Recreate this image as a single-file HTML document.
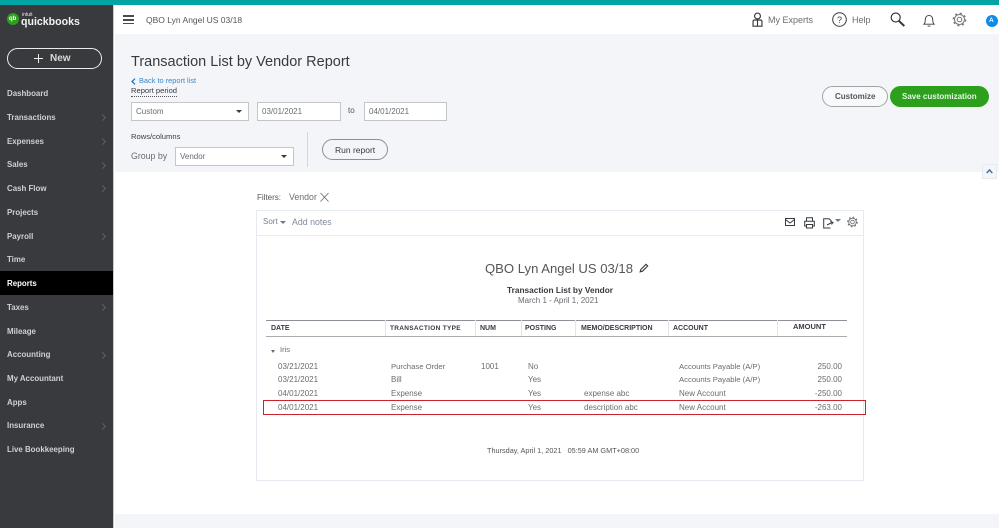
<!DOCTYPE html>
<html lang="en"><head><meta charset="utf-8"><title>Transaction List by Vendor Report</title>
<style>
html,body{margin:0;padding:0;width:999px;height:528px;overflow:hidden;background:#fff}
body{position:relative;font-family:"Liberation Sans",sans-serif;color:#393a3d}
#w{position:absolute;left:0;top:0;width:999px;height:528px;overflow:hidden;background:#fff;filter:blur(.35px)}
.a{position:absolute}
.t{position:absolute;white-space:nowrap;line-height:14px;height:14px}
.n{left:7px;font-size:7.9px;font-weight:bold;color:#cfd0d2}
.c{position:absolute;left:100px;width:4px;height:4px;border-top:1px solid #5f6063;border-right:1px solid #5f6063;transform:rotate(45deg)}
.h{font-size:7px;font-weight:bold;color:#393a3d}
.r{font-size:8px;color:#6b6c72}
.ac{font-size:7.7px}
.inp{position:absolute;background:#fff;border:1px solid #c4c6cb;box-sizing:border-box}
.arrow{position:absolute;width:0;height:0;border-left:3px solid transparent;border-right:3px solid transparent;border-top:3px solid #393a3d}
.sep{position:absolute;top:320px;width:1px;height:16px;background:#e3e5e8}
svg{position:absolute;overflow:visible}
</style></head><body><div id="w">
<div class="a" style="left:0;top:0;width:999px;height:5px;background:#00a5a3"></div>
<div class="a" style="left:115px;top:34px;width:884px;height:138px;background:#f4f5f8"></div>
<div class="a" style="left:115px;top:514px;width:884px;height:14px;background:#f4f5f8"></div>

<!-- sidebar -->
<div class="a" style="left:0;top:5px;width:113px;height:523px;background:#393a3d"></div>
<div class="a" style="left:113px;top:5px;width:1px;height:523px;background:#c9cacc"></div>
<div class="a" style="left:7px;top:13px;width:12px;height:12px;border-radius:50%;background:#2ca01c"></div>
<div class="t" style="left:9px;top:12px;font-size:6px;font-weight:bold;color:#fff">qb</div>
<div class="t" style="left:22px;top:8px;font-size:5px;color:#e8e8e8">intuit</div>
<div class="t" style="left:21px;top:15px;font-size:10.600px;font-weight:bold;color:#f2f2f2">quickbooks</div>
<div class="a" style="left:7px;top:48px;width:95px;height:21px;box-sizing:border-box;border:1.500px solid #eceded;border-radius:11px"></div>
<div class="a" style="left:34px;top:58px;width:9px;height:1px;background:#eee"></div>
<div class="a" style="left:38px;top:54px;width:1px;height:9px;background:#eee"></div>
<div class="t" style="left:50px;top:52px;font-size:10px;font-weight:bold;color:#d8d9da">New</div>
<div class="a" style="left:0;top:271px;width:113px;height:24px;background:#000"></div>
<div class="t n" style="top:87px">Dashboard</div>
<div class="t n" style="top:111px">Transactions</div><div class="c" style="top:115px"></div>
<div class="t n" style="top:135px">Expenses</div><div class="c" style="top:139px"></div>
<div class="t n" style="top:158px">Sales</div><div class="c" style="top:163px"></div>
<div class="t n" style="top:182px">Cash Flow</div><div class="c" style="top:186px"></div>
<div class="t n" style="top:206px">Projects</div>
<div class="t n" style="top:230px">Payroll</div><div class="c" style="top:234px"></div>
<div class="t n" style="top:253px">Time</div>
<div class="t n" style="top:277px;color:#fff">Reports</div>
<div class="t n" style="top:301px">Taxes</div><div class="c" style="top:305px"></div>
<div class="t n" style="top:325px">Mileage</div>
<div class="t n" style="top:348px">Accounting</div><div class="c" style="top:353px"></div>
<div class="t n" style="top:372px">My Accountant</div>
<div class="t n" style="top:396px">Apps</div>
<div class="t n" style="top:419px">Insurance</div><div class="c" style="top:424px"></div>
<div class="t n" style="top:443px">Live Bookkeeping</div>

<!-- top header -->
<div class="a" style="left:123px;top:15px;width:11px;height:1.500px;background:#4a4b4f"></div>
<div class="a" style="left:123px;top:19px;width:11px;height:1.500px;background:#4a4b4f"></div>
<div class="a" style="left:123px;top:22.500px;width:11px;height:1.500px;background:#4a4b4f"></div>
<div class="t" style="left:146px;top:13px;font-size:8.500px;color:#55565a">QBO Lyn Angel US 03/18</div>
<svg style="left:751px;top:12px" width="13" height="16" viewBox="0 0 14 18" fill="none" stroke="#393a3d" stroke-width="1.300"><circle cx="7" cy="4.500" r="3.300"/><path d="M2 16V10.500Q2 9 4 9H10Q12 9 12 10.500V16ZM7 9V16"/></svg>
<div class="t" style="left:768px;top:13px;font-size:9px;color:#6b6c72">My Experts</div>
<svg style="left:832px;top:12px" width="15" height="15" viewBox="0 0 15 15" fill="none" stroke="#393a3d" stroke-width="1"><circle cx="7.500" cy="7.500" r="6.800"/></svg>
<div class="t" style="left:837px;top:12.500px;font-size:9px;color:#393a3d">?</div>
<div class="t" style="left:852px;top:13px;font-size:9px;color:#6b6c72">Help</div>
<svg style="left:890px;top:12px" width="15" height="15" viewBox="0 0 15 15" fill="none" stroke="#393a3d" stroke-width="1.200"><circle cx="5.700" cy="5.500" r="4.500"/><path d="M9 9L14.300 14" stroke-width="2"/></svg>
<svg style="left:923px;top:13px" width="12" height="15" viewBox="0 0 13 15" fill="none" stroke="#393a3d" stroke-width="1"><path d="M1 11.500H12C10.500 10 10.500 8.500 10.500 6.500C10.500 4 9 2 6.500 2C4 2 2.500 4 2.500 6.500C2.500 8.500 2.500 10 1 11.500ZM5 13.500H8"/></svg>
<svg style="left:952px;top:12px" width="15" height="15" viewBox="0 0 15 15" fill="none" stroke="#77787c" stroke-width="1"><circle cx="7.500" cy="7.500" r="2.300"/><circle cx="7.500" cy="7.500" r="5" stroke-width="1"/><circle cx="7.500" cy="7.500" r="6.200" stroke-width="1.300" stroke-dasharray="2.200 2.670"/></svg>
<div class="a" style="left:985.500px;top:15px;width:12px;height:12px;border-radius:50%;background:#0d8be8"></div>
<div class="t" style="left:989px;top:14px;font-size:6.500px;font-weight:bold;color:#fff">A</div>

<!-- page title and controls -->
<div class="t" style="left:131px;top:53px;height:18px;line-height:18px;font-size:14.500px;color:#393a3d">Transaction List by Vendor Report</div>
<svg style="left:131px;top:78px" width="5" height="7" viewBox="0 0 5 7" fill="none" stroke="#1d6fb8" stroke-width="1.200"><path d="M4 .700L1 3.500L4 6.300"/></svg>
<div class="t" style="left:139px;top:74px;font-size:7.400px;color:#3a87c8">Back to report list</div>
<div class="t" style="left:131px;top:85px;font-size:7.600px;color:#393a3d;height:11px;line-height:12px;border-bottom:1px dotted #55565a">Report period</div>
<div class="inp" style="left:131px;top:102px;width:118px;height:19px"></div>
<div class="t" style="left:136px;top:105px;font-size:8px;color:#6b6c72">Custom</div>
<div class="arrow" style="left:236px;top:110px"></div>
<div class="inp" style="left:257px;top:102px;width:84px;height:19px"></div>
<div class="t" style="left:262px;top:105px;font-size:8px;color:#6b6c72">03/01/2021</div>
<div class="t" style="left:348px;top:104px;font-size:8px;color:#55565a">to</div>
<div class="inp" style="left:364px;top:102px;width:83px;height:19px"></div>
<div class="t" style="left:369px;top:105px;font-size:8px;color:#6b6c72">04/01/2021</div>
<div class="t" style="left:131px;top:130px;font-size:7.600px;color:#393a3d">Rows/columns</div>
<div class="t" style="left:131px;top:149px;font-size:8.800px;color:#6b6c72">Group by</div>
<div class="inp" style="left:175px;top:147px;width:119px;height:19px"></div>
<div class="t" style="left:180px;top:150px;font-size:8px;color:#6b6c72">Vendor</div>
<div class="arrow" style="left:281px;top:155px"></div>
<div class="a" style="left:307px;top:132px;width:1px;height:35px;background:#d4d7dc"></div>
<div class="a" style="left:322px;top:139px;width:66px;height:21px;box-sizing:border-box;border:1px solid #8d9096;border-radius:11px"></div>
<div class="t" style="left:335px;top:143px;font-size:8.500px;color:#393a3d">Run report</div>
<div class="a" style="left:822px;top:86px;width:66px;height:21px;box-sizing:border-box;border:1px solid #a2a4a9;border-radius:11px;background:#f8f9fb"></div>
<div class="t" style="left:835px;top:90px;font-size:8px;font-weight:bold;color:#55565a">Customize</div>
<div class="a" style="left:890px;top:86px;width:99px;height:21px;border-radius:11px;background:#2ca01c"></div>
<div class="t" style="left:902px;top:90px;font-size:8px;font-weight:bold;color:#e8f5e6">Save customization</div>
<div class="a" style="left:982px;top:164px;width:15px;height:15px;background:#f4f5f8;box-sizing:border-box;border:1px solid #e8eaf0"></div>
<svg style="left:986px;top:169px" width="7" height="5" viewBox="0 0 7 5" fill="none" stroke="#4a6fa8" stroke-width="1.500"><path d="M.700 4L3.500 1L6.300 4"/></svg>

<!-- filters -->
<div class="t" style="left:257px;top:191px;font-size:8px;color:#55565a">Filters:</div>
<div class="t" style="left:289px;top:190px;font-size:8.800px;color:#6b6c72">Vendor</div>
<svg style="left:320px;top:192px" width="9" height="10" viewBox="0 0 9 10" fill="none" stroke="#6b6c72" stroke-width=".9"><path d="M.500 1L8.500 9.500M8.500 1L.500 9.500"/></svg>

<!-- report card -->
<div class="a" style="left:256px;top:210px;width:608px;height:271px;box-sizing:border-box;border:1px solid #e6ebf2"></div>
<div class="a" style="left:257px;top:235px;width:606px;height:1px;background:#e8edf4"></div>
<div class="t" style="left:263px;top:215px;font-size:8px;color:#7c7e84">Sort</div>
<div class="arrow" style="left:280px;top:221px;border-top-color:#6b7890"></div>
<div class="t" style="left:292px;top:215px;font-size:8.800px;color:#7f8a9c">Add notes</div>
<svg style="left:785px;top:218px" width="10" height="9" viewBox="0 0 10 9" fill="none" stroke="#393a3d" stroke-width="1"><rect x=".500" y=".500" width="9" height="7"/><path d="M.500 1.500L5 5L9.500 1.500"/></svg>
<svg style="left:804px;top:217px" width="11" height="12" viewBox="0 0 11 12" fill="none" stroke="#393a3d" stroke-width="1"><path d="M2.500 4V.800H8.500V4M2.500 9H.700V4.300H10.300V9H8.500M2.500 7.500H8.500V11H2.500Z"/></svg>
<svg style="left:823px;top:218px" width="11" height="11" viewBox="0 0 11 11" fill="none" stroke="#393a3d" stroke-width="1"><path d="M7.500 10H.700V.700H6L8 2.500V4M4 7L9 4.500M7.500 3.500L10 4.500L8.500 6.500"/></svg>
<div class="arrow" style="left:835px;top:219px;border-top-color:#6b7890"></div>
<svg style="left:847px;top:216px" width="11" height="12" viewBox="0 0 11 12" fill="none" stroke="#6b6c72" stroke-width=".8"><circle cx="5.500" cy="6" r="1.800"/><circle cx="5.500" cy="6" r="3.800" stroke-width=".9"/><circle cx="5.500" cy="6" r="4.800" stroke-width="1.100" stroke-dasharray="1.600 2.170"/></svg>

<div class="t" style="left:485px;top:260px;height:17px;line-height:17px;font-size:13.100px;color:#55565a">QBO Lyn Angel US 03/18</div>
<svg style="left:639px;top:263px" width="10" height="10" viewBox="0 0 10 10" fill="none" stroke="#393a3d" stroke-width="1.100"><path d="M1.200 8.800L1.800 6.500L7 1.300L8.700 3L3.500 8.200Z"/></svg>
<div class="t" style="left:507px;top:283px;font-size:8.300px;font-weight:bold;color:#393a3d">Transaction List by Vendor</div>
<div class="t" style="left:518px;top:294px;font-size:8px;color:#6b6c72">March 1 - April 1, 2021</div>

<!-- table head -->
<div class="a" style="left:266px;top:320px;width:581px;height:1px;background:#8d9096"></div>
<div class="a" style="left:266px;top:336px;width:581px;height:1px;background:#a8abb0"></div>
<div class="sep" style="left:385px"></div><div class="sep" style="left:475px"></div><div class="sep" style="left:521px"></div><div class="sep" style="left:575px"></div><div class="sep" style="left:668px"></div><div class="sep" style="left:777px"></div>
<div class="t h" style="left:271px;top:321.500px">DATE</div>
<div class="t h" style="left:390px;top:321.500px;font-size:6.500px;letter-spacing:.3px">TRANSACTION TYPE</div>
<div class="t h" style="left:480px;top:321.500px">NUM</div>
<div class="t h" style="left:525px;top:321.500px">POSTING</div>
<div class="t h" style="left:581px;top:321.500px">MEMO/DESCRIPTION</div>
<div class="t h" style="left:673px;top:321.500px">ACCOUNT</div>
<div class="t h" style="left:793px;top:320px;font-size:7.500px">AMOUNT</div>

<div class="arrow" style="left:271px;top:350px;border-left-width:2.500px;border-right-width:2.500px;border-top-color:#6b6c72"></div>
<div class="t r" style="left:280px;top:343px;font-size:7.500px">Iris</div>

<div class="t r" style="left:278px;top:360px">03/21/2021</div><div class="t r ac" style="left:391px;top:360px">Purchase Order</div><div class="t r" style="left:481px;top:360px">1001</div><div class="t r" style="left:528px;top:360px">No</div><div class="t r ac" style="left:679px;top:360px">Accounts Payable (A/P)</div><div class="t r" style="right:157px;top:360px">250.00</div>
<div class="t r" style="left:278px;top:373px">03/21/2021</div><div class="t r" style="left:391px;top:373px">Bill</div><div class="t r" style="left:528px;top:373px">Yes</div><div class="t r ac" style="left:679px;top:373px">Accounts Payable (A/P)</div><div class="t r" style="right:157px;top:373px">250.00</div>
<div class="t r" style="left:278px;top:387px">04/01/2021</div><div class="t r" style="left:391px;top:387px">Expense</div><div class="t r" style="left:528px;top:387px">Yes</div><div class="t r" style="left:584px;top:387px">expense abc</div><div class="t r" style="left:679px;top:387px">New Account</div><div class="t r" style="right:157px;top:387px">-250.00</div>
<div class="t r" style="left:278px;top:401px">04/01/2021</div><div class="t r" style="left:391px;top:401px">Expense</div><div class="t r" style="left:528px;top:401px">Yes</div><div class="t r" style="left:584px;top:401px">description abc</div><div class="t r" style="left:679px;top:401px">New Account</div><div class="t r" style="right:157px;top:401px">-263.00</div>
<div class="a" style="left:263px;top:400px;width:603px;height:15px;box-sizing:border-box;border:1px solid #c8262c"></div>

<div class="t" style="left:487px;top:444px;font-size:7.300px;color:#55565a">Thursday, April 1, 2021&nbsp;&nbsp; 05:59 AM GMT+08:00</div>
</div></body></html>
